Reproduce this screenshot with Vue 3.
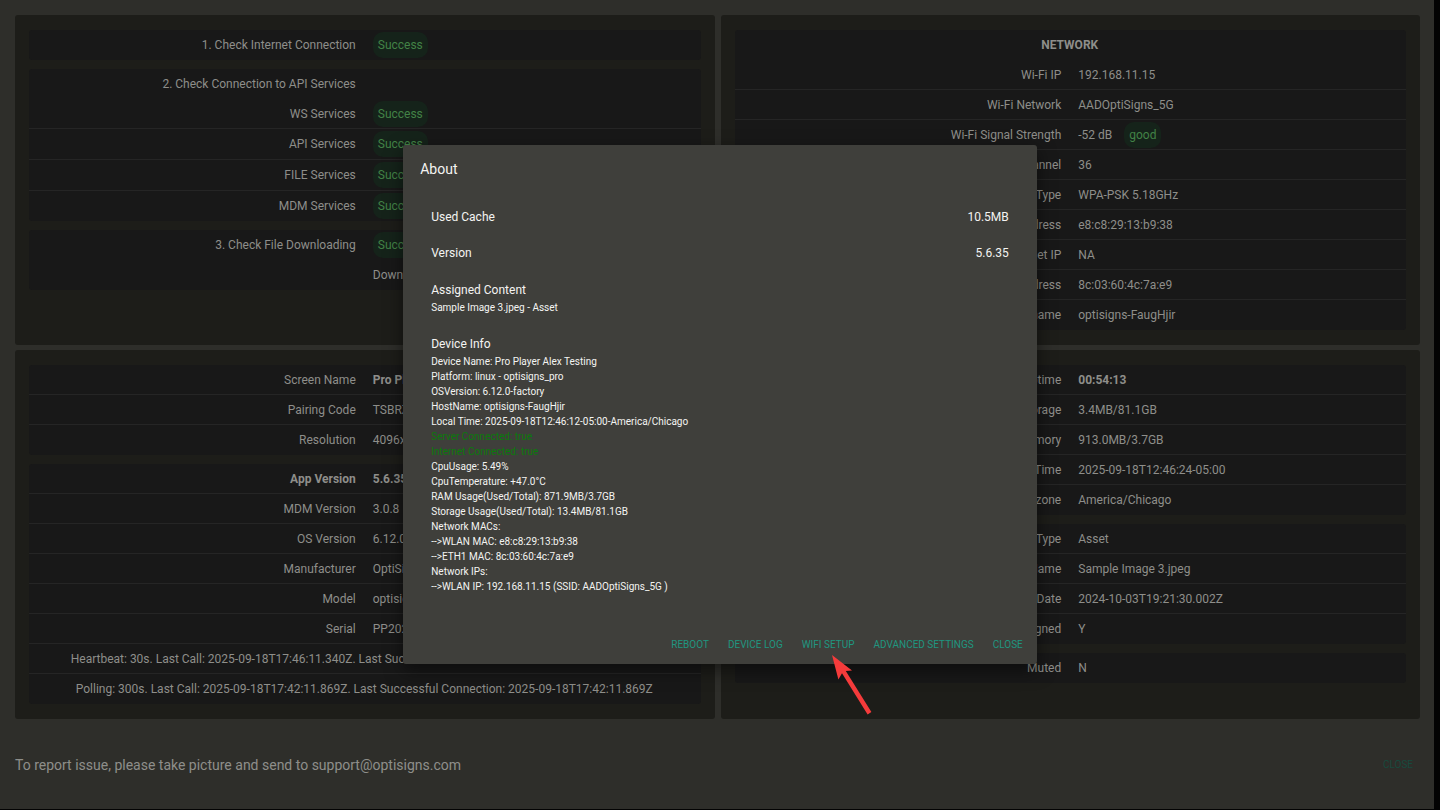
<template>
  <div class="screen">
    <main class="status-page">
      <div class="panels">
        <section v-for="(panel, p) in panels" :key="p" class="panel">
          <table v-for="(block, b) in panel" :key="b" class="block">
            <tbody>
              <tr v-for="(row, r) in block" :key="r" :class="{ plain: row.plain, tall: row.tall }">
                <th v-if="row.title" colspan="2" class="title">{{ row.title }}</th>
                <td v-else-if="row.note" colspan="2" class="note">{{ row.note }}</td>
                <template v-else>
                  <th scope="row" class="label" :class="{ bold: row.boldLabel }">{{ row.label }}</th>
                  <td class="value" :class="{ bold: row.bold }">
                    <span v-if="row.value" :class="{ before: row.badge }">{{ row.value }}</span>
                    <span v-if="row.badge" class="badge">{{ row.badge }}</span>
                  </td>
                </template>
              </tr>
            </tbody>
          </table>
        </section>
      </div>
      <footer class="footer">
        <p>To report issue, please take picture and send to support@optisigns.com</p>
        <button type="button" class="page-close">CLOSE</button>
      </footer>
    </main>

    <div v-if="aboutOpen" class="overlay">
      <div class="dialog" role="dialog" aria-labelledby="about-title">
        <h2 id="about-title">About</h2>
        <div class="dialog-body">
          <div class="stat"><span>Used Cache</span><span>10.5MB</span></div>
          <div class="stat"><span>Version</span><span>5.6.35</span></div>
          <div class="info">
            <h3>Assigned Content</h3>
            <p>Sample Image 3.jpeg - Asset</p>
          </div>
          <div class="info">
            <h3>Device Info</h3>
            <p v-for="line in deviceInfo" :key="line" :class="{ online: line.includes('Connected') }">{{ line }}</p>
          </div>
        </div>
        <div class="actions">
          <button type="button">REBOOT</button>
          <button type="button">DEVICE LOG</button>
          <button type="button" class="wifi">
            WIFI SETUP
            <svg class="arrow" width="40" height="60" viewBox="0 0 40 60" aria-hidden="true">
              <path d="M0 0 L20 15.5 L13.8 16 L39.4 57 L35.6 59.5 L10 18.3 L6.4 24.5 Z" />
            </svg>
          </button>
          <button type="button">ADVANCED SETTINGS</button>
          <button type="button" @click="aboutOpen = false">CLOSE</button>
        </div>
      </div>
    </div>
  </div>
</template>

<script setup>
import { ref } from 'vue'

const aboutOpen = ref(true)

const checks = [
  [{ label: '1. Check Internet Connection', badge: 'Success' }],
  [
    { label: '2. Check Connection to API Services', plain: true },
    { label: 'WS Services', badge: 'Success' },
    { label: 'API Services', badge: 'Success', tall: true },
    { label: 'FILE Services', badge: 'Success', tall: true },
    { label: 'MDM Services', badge: 'Success' }
  ],
  [
    { label: '3. Check File Downloading', badge: 'Success', plain: true },
    { label: '', value: 'Downloaded' }
  ]
]

const network = [
  [
    { title: 'NETWORK', plain: true },
    { label: 'Wi-Fi IP', value: '192.168.11.15' },
    { label: 'Wi-Fi Network', value: 'AADOptiSigns_5G' },
    { label: 'Wi-Fi Signal Strength', value: '-52 dB', badge: 'good' },
    { label: 'Channel', value: '36' },
    { label: 'Type', value: 'WPA-PSK 5.18GHz' },
    { label: 'Address', value: 'e8:c8:29:13:b9:38' },
    { label: 'Ethernet IP', value: 'NA' },
    { label: 'Address', value: '8c:03:60:4c:7a:e9' },
    { label: 'Hostname', value: 'optisigns-FaugHjir' }
  ]
]

const device = [
  [
    { label: 'Screen Name', value: 'Pro Player Alex Testing', bold: true },
    { label: 'Pairing Code', value: 'TSBRZ' },
    { label: 'Resolution', value: '4096x2160' }
  ],
  [
    { label: 'App Version', value: '5.6.35', bold: true, boldLabel: true },
    { label: 'MDM Version', value: '3.0.8' },
    { label: 'OS Version', value: '6.12.0-factory' },
    { label: 'Manufacturer', value: 'OptiSigns' },
    { label: 'Model', value: 'optisigns_pro' },
    { label: 'Serial', value: 'PP202' },
    { note: 'Heartbeat: 30s. Last Call: 2025-09-18T17:46:11.340Z. Last Successful Connection: 2025-09-18T17:46:11.340Z' },
    { note: 'Polling: 300s. Last Call: 2025-09-18T17:42:11.869Z. Last Successful Connection: 2025-09-18T17:42:11.869Z' }
  ]
]

const system = [
  [
    { label: 'Uptime', value: '00:54:13', bold: true },
    { label: 'Storage', value: '3.4MB/81.1GB' },
    { label: 'Memory', value: '913.0MB/3.7GB' },
    { label: 'Local Time', value: '2025-09-18T12:46:24-05:00' },
    { label: 'Timezone', value: 'America/Chicago' }
  ],
  [
    { label: 'Type', value: 'Asset' },
    { label: 'Name', value: 'Sample Image 3.jpeg' },
    { label: 'Date', value: '2024-10-03T19:21:30.002Z' },
    { label: 'Assigned', value: 'Y' }
  ],
  [{ label: 'Muted', value: 'N' }]
]

const panels = [checks, network, device, system]

const deviceInfo = [
  'Device Name: Pro Player Alex Testing',
  'Platform: linux - optisigns_pro',
  'OSVersion: 6.12.0-factory',
  'HostName: optisigns-FaugHjir',
  'Local Time: 2025-09-18T12:46:12-05:00-America/Chicago',
  'Server Connected: true',
  'Internet Connected: true',
  'CpuUsage: 5.49%',
  'CpuTemperature: +47.0°C',
  'RAM Usage(Used/Total): 871.9MB/3.7GB',
  'Storage Usage(Used/Total): 13.4MB/81.1GB',
  'Network MACs:',
  '-->WLAN MAC: e8:c8:29:13:b9:38',
  '-->ETH1 MAC: 8c:03:60:4c:7a:e9',
  'Network IPs:',
  '-->WLAN IP: 192.168.11.15 (SSID: AADOptiSigns_5G )'
]
</script>

<style>
body {
  background: #030303;
}
</style>

<style scoped>
.screen {
  position: relative;
  min-height: 100vh;
  box-sizing: border-box;
  padding: 0 6px 1px 0;
  display: flex;
  font-family: Roboto, "Liberation Sans", sans-serif;
  font-size: 12px;
  color: #8e8e8a;
}

.status-page {
  flex: 1;
  box-sizing: border-box;
  padding: 15px 14px 0 15px;
  background: #2e2e2a;
}

/* four status panels */
.panels {
  display: grid;
  grid-template-columns: 1fr 1fr;
  gap: 5px 6px;
}

.panel {
  display: flex;
  flex-direction: column;
  gap: 9px;
  padding: 15px 14px;
  background: #1d1d19;
  border-radius: 3px;
}

.block {
  width: 100%;
  table-layout: fixed;
  border-spacing: 0;
  background: #181818;
  border-radius: 3px;
}

.block th,
.block td {
  box-sizing: border-box;
  height: 30px;
  padding: 0 9px 0 8px;
  border-bottom: 1px solid #252525;
  font-weight: 400;
  line-height: 14px;
  white-space: nowrap;
}

.block .tall th,
.block .tall td {
  height: 31px;
}

.block .plain th,
.block .plain td,
.block tr:last-child th,
.block tr:last-child td {
  border-bottom-color: transparent;
}

.block .label {
  text-align: right;
}

.block .value {
  text-align: left;
}

.block .note {
  text-align: center;
}

.block .title,
.block .bold {
  font-weight: 700;
}

.before {
  margin-right: 12px;
}

.badge {
  display: inline-block;
  padding: 6px 5px;
  border-radius: 10px;
  background: #15231a;
  color: #428246;
}

.footer {
  display: flex;
  align-items: center;
  justify-content: space-between;
  padding: 36px 7px 34px 0;
}

.footer p {
  margin: 0;
  font-size: 14px;
  line-height: 20px;
}

button {
  padding: 0;
  border: 0;
  background: none;
  font-family: inherit;
  font-size: 10px;
  line-height: 14px;
  color: #209680;
  cursor: pointer;
}

.page-close {
  color: #174a3e;
}

/* about dialog */
.overlay {
  position: absolute;
  inset: 0;
  display: flex;
  align-items: center;
  justify-content: center;
  padding-bottom: 2px;
}

.dialog {
  width: 44%;
  border-radius: 3px;
  background: #3f3f3b;
  color: #f4f4f2;
  box-shadow: 0 6px 18px rgba(0, 0, 0, 0.5);
}

.dialog h2 {
  margin: 0;
  padding: 14px 17px;
  font-size: 14px;
  font-weight: 400;
  line-height: 20px;
}

.dialog-body {
  padding: 6px 28px 0;
}

.stat {
  display: flex;
  justify-content: space-between;
  line-height: 36px;
}

.info {
  padding: 10px 0;
}

.info h3 {
  margin: 0;
  font-size: 12px;
  font-weight: 400;
  line-height: 19px;
}

.info p {
  margin: 0;
  font-size: 10px;
  line-height: 15px;
}

.info .online {
  color: #0b7a0b;
}

.actions {
  display: flex;
  justify-content: flex-end;
  gap: 19px;
  padding: 34px 14px 12px;
}

.wifi {
  position: relative;
}

.arrow {
  position: absolute;
  top: 17px;
  left: 30px;
  fill: #f53b3b;
  pointer-events: none;
}
</style>
